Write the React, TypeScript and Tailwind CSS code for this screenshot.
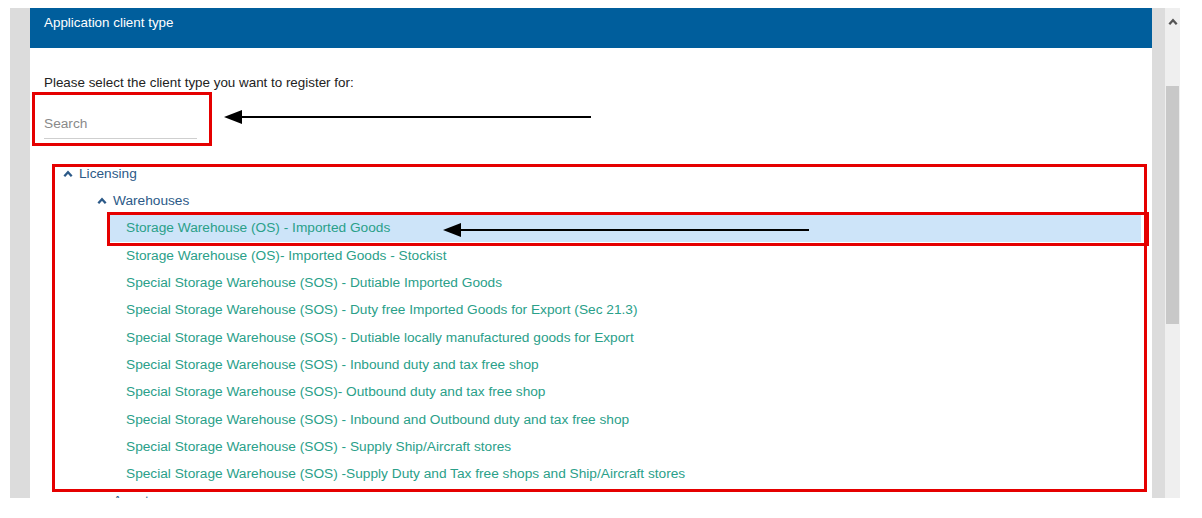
import React from "react";

const items = [
  "Storage Warehouse (OS) - Imported Goods",
  "Storage Warehouse (OS)- Imported Goods - Stockist",
  "Special Storage Warehouse (SOS) - Dutiable Imported Goods",
  "Special Storage Warehouse (SOS) - Duty free Imported Goods for Export (Sec 21.3)",
  "Special Storage Warehouse (SOS) - Dutiable locally manufactured goods for Export",
  "Special Storage Warehouse (SOS) - Inbound duty and tax free shop",
  "Special Storage Warehouse (SOS)- Outbound duty and tax free shop",
  "Special Storage Warehouse (SOS) - Inbound and Outbound duty and tax free shop",
  "Special Storage Warehouse (SOS) - Supply Ship/Aircraft stores",
  "Special Storage Warehouse (SOS) -Supply Duty and Tax free shops and Ship/Aircraft stores",
];

function Chevron({ className = "" }: { className?: string }) {
  return (
    <svg width="10" height="8" viewBox="0 0 10 8" className={className}>
      <polyline
        points="1.3,6.3 5,2.3 8.7,6.3"
        fill="none"
        stroke="currentColor"
        strokeWidth="2.3"
      />
    </svg>
  );
}

function Arrow({ left, top, width }: { left: number; top: number; width: number }) {
  return (
    <div
      className="pointer-events-none absolute flex items-center"
      style={{ left, top, width }}
    >
      <svg width="18" height="14" viewBox="0 0 18 14" className="shrink-0">
        <polygon points="0,7 18,0 18,14" fill="#000" />
      </svg>
      <div className="h-[2px] flex-1 bg-black" />
    </div>
  );
}

export default function App() {
  return (
    <div className="relative h-[518px] w-[1202px] overflow-hidden bg-white font-['Liberation_Sans',Arial,sans-serif] text-[13.7px]">
      <div className="flex h-[498px] pt-2 pl-[10px]">
        <div className="w-5 bg-[#dcdcdc]" />

        <div className="flex w-[1122px] flex-col overflow-hidden bg-white">
          <div className="h-10 shrink-0 bg-[#005e9c] px-[14px] pt-[7px] text-[13.4px] leading-4 text-white">
            Application client type
          </div>

          <div className="pl-[14px] pt-[27px]">
            <p className="h-4 text-[13.4px] leading-4 text-[#222]">
              Please select the client type you want to register for:
            </p>
            <div className="mt-[19px] flex h-[29px] w-[153px] items-center border-b border-[#cfcfcf] text-[#8a8a8a]">
              Search
            </div>

            <ul className="mt-[21.5px] pl-[19px]">
              <li className="flex h-[27.3px] items-center gap-[6px] text-[#2c5a88]">
                <Chevron />
                <span>Licensing</span>
              </li>
              <li className="flex h-[27.3px] items-center gap-[6px] pl-[34px] text-[#2c5a88]">
                <Chevron />
                <span>Warehouses</span>
              </li>
              {items.map((item, i) => (
                <li
                  key={item}
                  className={
                    i === 0
                      ? "ml-[47px] mr-[11px] flex h-[27.3px] items-center bg-[#cde4f9] pl-4 text-[#2aa089]"
                      : "ml-[47px] mr-[11px] flex h-[27.3px] items-center pl-4 text-[#2aa089]"
                  }
                >
                  {item}
                </li>
              ))}
              <li className="flex h-[27.3px] items-center gap-[6px] pl-[34px] text-[#2c5a88]">
                <Chevron />
                <span>Agents</span>
              </li>
            </ul>
          </div>
        </div>

        <div className="w-[13px] bg-[#dcdcdc]" />
        <div className="flex w-[15px] flex-col items-center bg-[#efefef]">
          <Chevron className="mt-[10px] text-[#555]" />
          <div className="mt-[60px] h-[238px] w-[13px] bg-[#c8c8c8]" />
        </div>
      </div>

      <div className="pointer-events-none absolute left-[32px] top-[92px] h-[54px] w-[180px] border-[3px] border-[#e50000]" />
      <div className="pointer-events-none absolute left-[52px] top-[164px] h-[328px] w-[1095px] border-[3px] border-[#e50000]" />
      <div className="pointer-events-none absolute left-[107px] top-[212px] h-[34px] w-[1042px] border-[3px] border-[#e50000]" />

      <Arrow left={224} top={110} width={367} />
      <Arrow left={443} top={223} width={366} />
    </div>
  );
}
